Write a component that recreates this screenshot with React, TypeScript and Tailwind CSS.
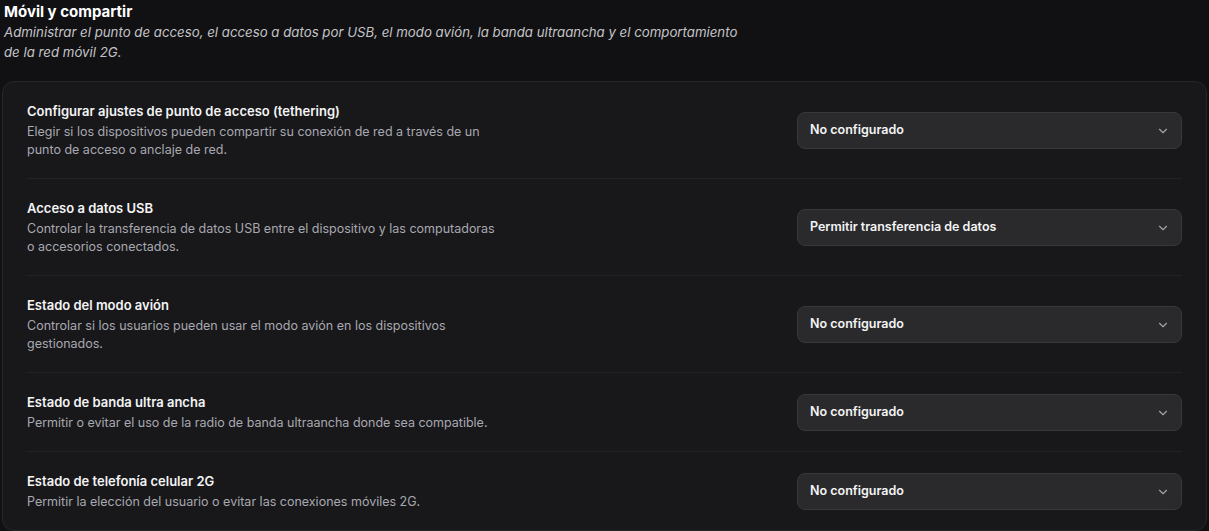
import { ChevronDown } from "lucide-react";

type Setting = {
    title: string
    description: string
    value: string
}

const settings: Setting[] = [
    {
        title: "Configurar ajustes de punto de acceso (tethering)",
        description: "Elegir si los dispositivos pueden compartir su conexión de red a través de un punto de acceso o anclaje de red.",
        value: "No configurado",
    },
    {
        title: "Acceso a datos USB",
        description: "Controlar la transferencia de datos USB entre el dispositivo y las computadoras o accesorios conectados.",
        value: "Permitir transferencia de datos",
    },
    {
        title: "Estado del modo avión",
        description: "Controlar si los usuarios pueden usar el modo avión en los dispositivos gestionados.",
        value: "No configurado",
    },
    {
        title: "Estado de banda ultra ancha",
        description: "Permitir o evitar el uso de la radio de banda ultraancha donde sea compatible.",
        value: "No configurado",
    },
    {
        title: "Estado de telefonía celular 2G",
        description: "Permitir la elección del usuario o evitar las conexiones móviles 2G.",
        value: "No configurado",
    },
]

const Select = ({ value }: { value: string }) => {
    return (
        <button className="flex h-[37px] w-[385px] shrink-0 items-center justify-between rounded-lg border border-[#38383c] bg-[#2a2a2d] pl-3 pr-[11px] text-left">
            <span className="text-[12.5px] font-semibold text-[#f4f4f5]">{value}</span>
            <ChevronDown size={14} strokeWidth={2} className="text-[#a1a1aa]" />
        </button>
    )
}

const App = () => {
    return (
        <div className="min-h-screen bg-[#111113] px-[2px] pt-[2px] font-['Inter',sans-serif]">
            <div className="pl-[2px]">
                <h2 className="text-[15px] font-bold leading-5 text-white">Móvil y compartir</h2>
                <p className="max-w-[740px] text-[13.25px] italic leading-5 text-[#c4c4c8]">
                    Administrar el punto de acceso, el acceso a datos por USB, el modo avión, la banda ultraancha y el comportamiento de la red móvil 2G.
                </p>
            </div>
            <div className="mt-[19px] rounded-xl border border-[#27272a] bg-[#18181b] px-6">
                {settings.map((setting, index) => (
                    <div
                        key={index}
                        className={`flex items-center justify-between pt-5 pb-[19px] ${index > 0 ? 'border-t border-[#232326]' : ''}`}
                    >
                        <div className="max-w-[472px]">
                            <h3 className="text-[13px] font-semibold leading-[18px] text-[#f4f4f5]">{setting.title}</h3>
                            <p className="mt-[3px] text-[12.5px] leading-[18px] text-[#a8a8b0]">{setting.description}</p>
                        </div>
                        <Select value={setting.value} />
                    </div>
                ))}
            </div>
        </div>
    )
}

export default App
